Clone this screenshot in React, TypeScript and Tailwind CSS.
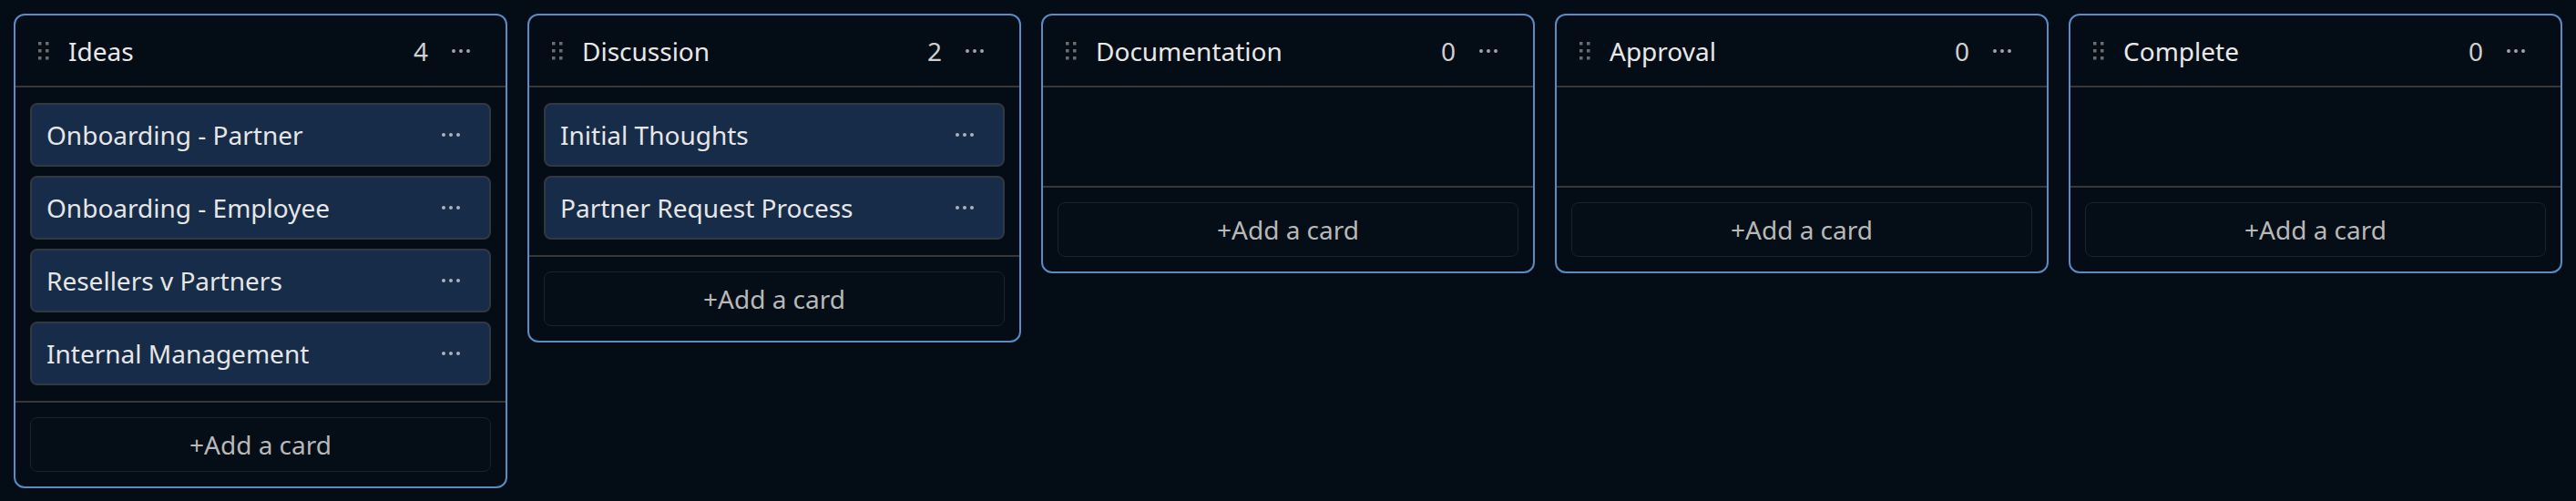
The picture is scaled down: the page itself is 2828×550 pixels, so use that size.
import React from "react";

interface Column {
  title: string;
  cards: string[];
}

const columns: Column[] = [
  {
    title: "Ideas",
    cards: ["Onboarding - Partner", "Onboarding - Employee", "Resellers v Partners", "Internal Management"],
  },
  { title: "Discussion", cards: ["Initial Thoughts", "Partner Request Process"] },
  { title: "Documentation", cards: [] },
  { title: "Approval", cards: [] },
  { title: "Complete", cards: [] },
];

const Grip = () => (
  <svg width="12" height="20" viewBox="0 0 12 20" className="shrink-0">
    {[0, 8].map((x) =>
      [0, 8, 16].map((y) => <rect key={`${x}-${y}`} x={x} y={y} width="3.5" height="3.5" fill="#6d6d6d" />)
    )}
  </svg>
);

const Dots: React.FC<{ color: string }> = ({ color }) => (
  <svg width="22" height="6" viewBox="0 0 22 6" className="shrink-0">
    <circle cx="3" cy="3" r="2" fill={color} />
    <circle cx="11" cy="3" r="2" fill={color} />
    <circle cx="19" cy="3" r="2" fill={color} />
  </svg>
);

const BoardColumn: React.FC<{ column: Column }> = ({ column }) => {
  return (
    <div className="flex-1 min-w-0 flex flex-col rounded-xl border-2 border-[#5b8ac4] bg-[#040d16]">
      <div className="h-[79px] flex items-center pl-[25px] pr-[38px] border-b-2 border-[#373737]">
        <Grip />
        <span className="ml-[21px] text-[28px] text-[#e8e8e8]">{column.title}</span>
        <span className="ml-auto text-[28px] text-[#cfcfcf]">{column.cards.length}</span>
        <span className="ml-[25px] flex items-center">
          <Dots color="#9ea1a5" />
        </span>
      </div>

      <div className="min-h-[110px] px-4 py-[17px] flex flex-col gap-[10px] border-b-2 border-[#373737]">
        {column.cards.map((card) => (
          <div
            key={card}
            className="h-[70px] flex items-center pl-4 pr-[31px] rounded-lg border-2 border-[#323841] bg-[#172c48]"
          >
            <span className="text-[28px] text-[#e6e6e6]">{card}</span>
            <span className="ml-auto flex items-center">
              <Dots color="#adb2b9" />
            </span>
          </div>
        ))}
      </div>

      <div className="p-4">
        <button className="w-full h-[60px] rounded-lg border border-[#1b222b] bg-[#050e17] text-[28px] text-[#b8b8b8]">
          +Add a card
        </button>
      </div>
    </div>
  );
};

export default function App() {
  return (
    <div
      className="min-h-[550px] bg-[#040d16] flex items-start gap-[22px] p-[15px]"
      style={{ fontFamily: "'Noto Sans', sans-serif" }}
    >
      {columns.map((column) => (
        <BoardColumn key={column.title} column={column} />
      ))}
    </div>
  );
}
